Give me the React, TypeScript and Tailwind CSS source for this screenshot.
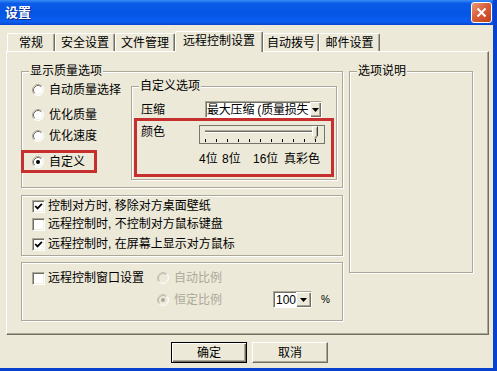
import React from 'react';

function Radio({ checked = false, disabled = false }: { checked?: boolean; disabled?: boolean }) {
  return (
    <svg width="12" height="12" viewBox="0 0 12 12" className="shrink-0">
      <circle cx="6" cy="6" r="5.5" fill={disabled ? '#ece9d8' : '#fff'} />
      <path d="M2.11 9.89 A5.5 5.5 0 0 1 9.89 2.11" fill="none" stroke={disabled ? '#c9c6b8' : '#aca899'} />
      <path d="M9.89 2.11 A5.5 5.5 0 0 1 2.11 9.89" fill="none" stroke="#fff" />
      <path d="M2.82 9.18 A4.5 4.5 0 0 1 9.18 2.82" fill="none" stroke={disabled ? '#bdbaac' : '#716f64'} />
      <path d="M9.18 2.82 A4.5 4.5 0 0 1 2.82 9.18" fill="none" stroke="#f1efe2" />
      {checked && <circle cx="6" cy="6" r="2" fill={disabled ? '#aca899' : '#000'} />}
    </svg>
  );
}

function Checkbox({ checked = false }: { checked?: boolean }) {
  return (
    <span className="w-[13px] h-[13px] shrink-0 bg-white border border-t-[#aca899] border-l-[#aca899] border-r-white border-b-white shadow-[inset_1px_1px_0_#716f64,inset_-1px_-1px_0_#f1efe2] flex items-center justify-center">
      {checked && (
        <svg width="9" height="9" viewBox="0 0 9 9">
          <path d="M1.2 4 L3.5 6.4 L7.9 1.8" fill="none" stroke="#000" strokeWidth="1.8" />
        </svg>
      )}
    </span>
  );
}

function ArrowButton({ className }: { className: string }) {
  return (
    <span
      className={`h-full shrink-0 bg-[#ece9d8] flex items-center justify-center shadow-[inset_1px_1px_0_#fff,inset_-1px_-1px_0_#716f64,inset_-2px_-2px_0_#aca899] ${className}`}
    >
      <svg width="7" height="4" viewBox="0 0 7 4">
        <path d="M0 0 H7 L3.5 4 Z" fill="#000" />
      </svg>
    </span>
  );
}

function GroupBox({
  title,
  className,
  children,
}: {
  title?: string;
  className: string;
  children?: React.ReactNode;
}) {
  return (
    <div
      className={`relative shrink-0 border border-[#aca899] shadow-[1px_1px_0_#fff,inset_1px_1px_0_#fff] ${className}`}
    >
      {title && (
        <span className="absolute top-[-8px] left-[7px] px-[1px] bg-[#ece9d8] leading-[14px] whitespace-nowrap">
          {title}
        </span>
      )}
      {children}
    </div>
  );
}

function Slider() {
  const ticks = Array.from({ length: 11 }, (_, i) => 6 + i * 11);
  return (
    <svg width="126" height="19" viewBox="0 0 126 19" className="mt-[4px] shrink-0">
      <rect x="0.5" y="0.5" width="125" height="18" fill="none" stroke="#000" strokeDasharray="1 1" />
      <rect x="6" y="5" width="110" height="1" fill="#aca899" />
      <rect x="6" y="6" width="110" height="1" fill="#716f64" />
      <rect x="6" y="7" width="110" height="1" fill="#fff" />
      {ticks.map((x) => (
        <rect key={x} x={x} y="14" width="1" height="3" fill="#000" />
      ))}
      {/* thumb */}
      <path d="M113 1 H119 V11 L116 14 L113 11 Z" fill="#ece9d8" />
      <path d="M113.5 11 V1.5 H118.5" stroke="#fff" fill="none" />
      <path d="M118.5 1.5 V11 L115.8 13.7" stroke="#404040" fill="none" />
      <path d="M117.5 2.5 V10.6 L115.6 12.5" stroke="#aca899" fill="none" />
    </svg>
  );
}

const tabs = [
  { label: '常规', w: 'w-[48px]' },
  { label: '安全设置', w: 'w-[60px]' },
  { label: '文件管理', w: 'w-[60px]' },
  { label: '远程控制设置', w: 'w-[88px]', active: true },
  { label: '自动拨号', w: 'w-[56px]' },
  { label: '邮件设置', w: 'w-[61px]' },
];

export default function App() {
  return (
    <div className="w-[497px] h-[371px] overflow-hidden bg-[#ece9d8] border-r-[4px] border-b-[3px] border-[#0841ce] flex flex-col text-[12px] leading-[14px] text-black font-['Liberation_Sans','Noto_Sans_CJK_SC',sans-serif]">
      {/* Title bar */}
      <div className="h-[25px] shrink-0 flex items-center justify-between pl-[5px] pr-[1px] bg-[linear-gradient(180deg,#3a8cf6_0%,#0a5ce8_14%,#0555e4_55%,#0b5ff0_86%,#0846d0_100%)]">
        <span className="text-white font-bold text-[13px] leading-[15px] [text-shadow:1px_1px_0_#0b2a8a]">设置</span>
        <span className="w-[21px] h-[21px] rounded-[3px] border border-white bg-[linear-gradient(135deg,#ec9a7c_0%,#d8603a_45%,#c2401a_100%)] flex items-center justify-center">
          <svg width="11" height="11" viewBox="0 0 11 11">
            <path d="M1.5 1.5 L9.5 9.5 M9.5 1.5 L1.5 9.5" stroke="#fff" strokeWidth="2" />
          </svg>
        </span>
      </div>

      <div className="flex-1 pl-[6px] pt-[6px]">
        {/* Tabs */}
        <div className="flex items-end h-[20px] pl-[1px]">
          {tabs.map((t) =>
            t.active ? (
              <div
                key={t.label}
                className={`relative z-10 h-[21px] -mb-[1px] pb-[2px] bg-[#ece9d8] flex items-center justify-center border-t border-l border-r border-t-white border-l-white border-r-[#716f64] shadow-[inset_-1px_0_0_#aca899] rounded-t-[2px] ${t.w}`}
              >
                {t.label}
              </div>
            ) : (
              <div
                key={t.label}
                className={`h-[18px] flex items-center justify-center border-t border-l border-r border-t-white border-l-white border-r-[#716f64] shadow-[inset_-1px_0_0_#aca899] rounded-t-[2px] ${t.w}`}
              >
                {t.label}
              </div>
            )
          )}
        </div>

        {/* Tab panel */}
        <div className="w-[483px] h-[284px] border border-t-white border-l-white border-r-[#716f64] border-b-[#716f64] shadow-[inset_-1px_-1px_0_#aca899] flex pl-[14px] pt-[19px]">
          <div className="w-[322px] flex flex-col">
            {/* Display quality */}
            <GroupBox title="显示质量选项" className="h-[117px] flex">
              <div className="w-[109px] flex flex-col pl-[10px] pt-[10px]">
                <div className="h-[16px] flex items-center gap-[5px]">
                  <Radio />
                  <span>自动质量选择</span>
                </div>
                <div className="mt-[9px] h-[16px] flex items-center gap-[5px]">
                  <Radio />
                  <span>优化质量</span>
                </div>
                <div className="mt-[5px] h-[16px] flex items-center gap-[5px]">
                  <Radio />
                  <span>优化速度</span>
                </div>
                <div className="mt-[6px] -ml-[11px] w-[76px] h-[23px] border-[3px] border-[#c5302f] pl-[8px] flex items-center gap-[5px]">
                  <Radio checked />
                  <span>自定义</span>
                </div>
              </div>

              <GroupBox title="自定义选项" className="mt-[14px] w-[206px] h-[94px] flex flex-col">
                <div className="flex items-center mt-[14px] h-[17px]">
                  <span className="w-[73px] pl-[9px]">压缩</span>
                  <div className="w-[117px] h-[17px] flex bg-white border border-t-[#aca899] border-l-[#aca899] border-r-white border-b-white shadow-[inset_1px_1px_0_#716f64]">
                    <span className="flex-1 overflow-hidden whitespace-nowrap pl-[1px] pt-[1px] leading-[14px] tracking-[-0.2px]">
                      最大压缩 (质量损失
                    </span>
                    <ArrowButton className="w-[11px]" />
                  </div>
                </div>
                <div className="ml-[2px] w-[200px] h-[59px] border-[3px] border-[#c5302f] flex flex-col">
                  <div className="flex items-start">
                    <span className="w-[62px] pl-[4px] pt-[4px]">颜色</span>
                    <Slider />
                  </div>
                  <div className="flex mt-[8px] pl-[62px] whitespace-nowrap">
                    <span className="w-[23px]">4位</span>
                    <span className="w-[31px]">8位</span>
                    <span className="w-[31px]">16位</span>
                    <span>真彩色</span>
                  </div>
                </div>
              </GroupBox>
            </GroupBox>

            {/* Checkbox options */}
            <GroupBox className="mt-[7px] h-[61px] flex flex-col pl-[10px] pt-[2px]">
              <div className="h-[16px] flex items-center gap-[3px]">
                <Checkbox checked />
                <span>控制对方时, 移除对方桌面壁纸</span>
              </div>
              <div className="mt-[2px] h-[16px] flex items-center gap-[3px]">
                <Checkbox />
                <span>远程控制时, 不控制对方鼠标键盘</span>
              </div>
              <div className="mt-[4px] h-[16px] flex items-center gap-[3px]">
                <Checkbox checked />
                <span>远程控制时, 在屏幕上显示对方鼠标</span>
              </div>
            </GroupBox>

            {/* Window settings */}
            <GroupBox className="mt-[6px] h-[59px] flex flex-col">
              <div className="mt-[7px] h-[16px] pl-[10px] flex items-center">
                <Checkbox />
                <span className="ml-[3px] w-[109px]">远程控制窗口设置</span>
                <Radio disabled />
                <span className="ml-[5px] text-[#aca899]">自动比例</span>
              </div>
              <div className="mt-[5px] h-[17px] pl-[135px] flex items-center">
                <Radio checked disabled />
                <span className="ml-[5px] w-[48px] text-[#aca899]">恒定比例</span>
                <div className="ml-[51px] w-[39px] h-[17px] flex bg-white border border-t-[#aca899] border-l-[#aca899] border-r-white border-b-white shadow-[inset_1px_1px_0_#716f64]">
                  <span className="flex-1 pl-[2px] pt-[1px] leading-[14px]">100</span>
                  <ArrowButton className="w-[15px]" />
                </div>
                <span className="ml-[9px] text-[10px]">%</span>
              </div>
            </GroupBox>
          </div>

          {/* Description */}
          <GroupBox title="选项说明" className="ml-[6px] w-[124px] h-[202px]" />
        </div>

        {/* Buttons */}
        <div className="flex gap-[5px] pl-[165px] mt-[7px]">
          <button className="w-[76px] h-[21px] flex items-center justify-center bg-[#ece9d8] border border-black shadow-[inset_1px_1px_0_#fff,inset_-1px_-1px_0_#716f64,inset_-2px_-2px_0_#aca899]">
            确定
          </button>
          <button className="w-[76px] h-[21px] flex items-center justify-center bg-[#ece9d8] border border-t-white border-l-white border-r-[#716f64] border-b-[#716f64] shadow-[inset_-1px_-1px_0_#aca899]">
            取消
          </button>
        </div>
      </div>
    </div>
  );
}
